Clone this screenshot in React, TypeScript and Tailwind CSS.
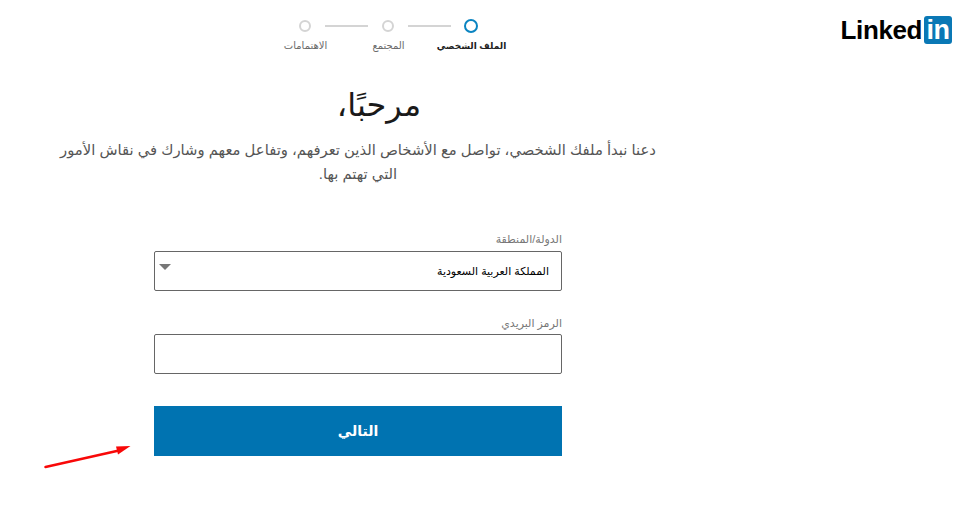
import React from "react";

const font = { arabic: "font-['Liberation_Sans','DejaVu_Sans',sans-serif]" };

function Stepper() {
  return (
    <div className="ml-[264px] w-[249px] pt-[19px]">
      <div className="flex h-[14px] items-center pl-[35px]">
        <span className="h-3 w-3 rounded-full border-2 border-[#d4d4d4]" />
        <span className="ml-[14px] h-0.5 w-[43px] bg-[#d4d4d4]" />
        <span className="ml-[14px] h-3 w-3 rounded-full border-2 border-[#d4d4d4]" />
        <span className="ml-[14px] h-0.5 w-[43px] bg-[#d4d4d4]" />
        <span className="ml-[13px] h-3.5 w-3.5 rounded-full border-2 border-[#0a84c1]" />
      </div>
      <div className="mt-[5px] grid grid-cols-3 text-center text-[10px] leading-[16px]">
        <span className="text-[#6b6b6b]">الاهتمامات</span>
        <span className="text-[#6b6b6b]">المجتمع</span>
        <span className="text-[9px] font-bold text-[#222]">الملف الشخصي</span>
      </div>
    </div>
  );
}

function Logo() {
  return (
    <div className="flex items-center self-start pt-4 font-['Liberation_Sans',sans-serif]">
      <span className="text-[26px] leading-7 font-bold tracking-[-0.4px] text-black">Linked</span>
      <span className="ml-0.5 flex h-7 w-7 items-center justify-center rounded-[3px] bg-[#0a78b5] text-[27px] leading-7 font-bold tracking-[-0.5px] text-white">in</span>
    </div>
  );
}

export default function App() {
  return (
    <div className={`relative h-[528px] w-[970px] overflow-hidden bg-white ${font.arabic}`}>
      <div className="flex justify-between pr-[18px]">
        <div className="w-[716px]">
          <Stepper />

          <div dir="rtl" className="mt-[29px] text-center">
            <h1 className="pl-[42px] text-[32px] leading-[44px] font-normal text-[#1a1a1a]">مرحبًا،</h1>
            <p className="mx-auto mt-[11px] w-[640px] text-[14.8px] leading-6 text-[#555]">
              دعنا نبدأ ملفك الشخصي، تواصل مع الأشخاص الذين تعرفهم، وتفاعل معهم وشارك في نقاش الأمور
              <br />
              التي تهتم بها.
            </p>
          </div>

          <form dir="rtl" className="mx-auto mt-[44px] w-[408px]">
            <label className="block text-[11px] leading-[18px] text-[#777]">الدولة/المنطقة</label>
            <div className="relative mt-[3px] flex h-10 items-center rounded-[2px] border border-[#666] px-3 text-[11px] text-black">
              المملكة العربية السعودية
              <span className="absolute top-3 left-1 h-0 w-0 border-x-[6px] border-t-[6px] border-x-transparent border-t-[#777]" />
            </div>

            <label className="mt-[23px] block text-[11px] leading-[18px] text-[#777]">الرمز البريدي</label>
            <input className="mt-[2px] block h-10 w-full rounded-[2px] border border-[#666] outline-none" />

            <button type="button" className="mt-8 block h-[50px] w-full bg-[#0073b1] text-[14px] font-bold text-white">
              التالي
            </button>
          </form>
        </div>
        <Logo />
      </div>

      {/* red annotation arrow */}
      <svg className="absolute top-[440px] left-[40px]" width="100" height="34" viewBox="0 0 100 34">
        <path d="M5.5 27 L79 10.5" stroke="#f80808" strokeWidth="2.5" strokeLinecap="round" />
        <path d="M76 6.5 L90.5 6 L78 14.5 Z" fill="#f80808" />
      </svg>
    </div>
  );
}
